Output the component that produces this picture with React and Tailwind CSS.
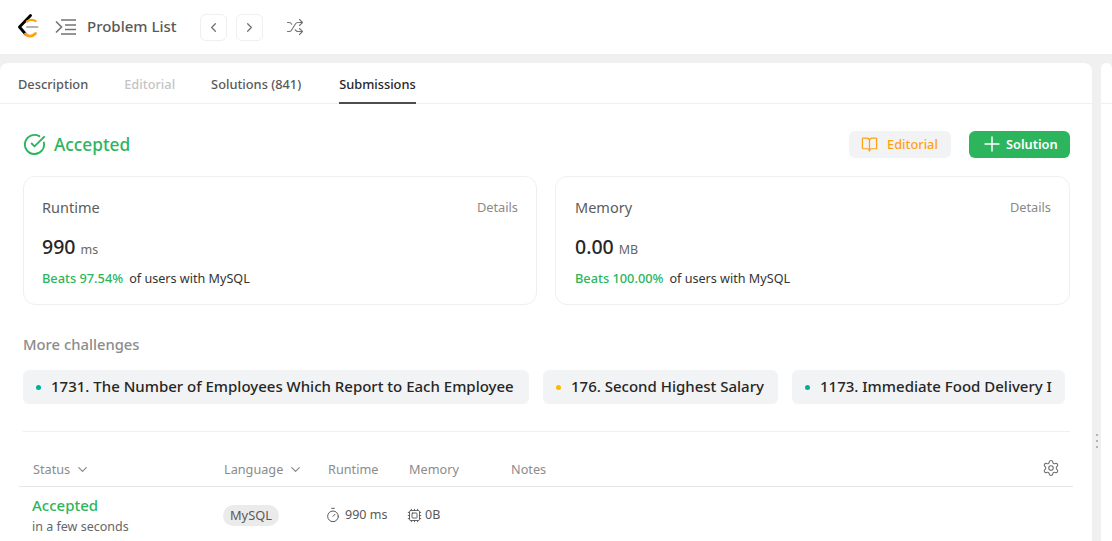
import React from "react";
import { ChevronDown, ChevronLeft, ChevronRight, Shuffle, BookOpen, Plus, Settings, Timer, Cpu, CircleCheckBig } from "lucide-react";

const font = "font-['Noto_Sans','Open_Sans',sans-serif]";

const Logo = () => (
  <svg width="22" height="26" viewBox="0 0 22 26" fill="none" strokeLinecap="round" strokeLinejoin="round">
    <path d="M12.5 1.5 L1.5 13 L7.5 20" stroke="#000" strokeWidth="2.8" />
    <path d="M7.5 20 C10.5 23.5 14.5 22.5 17.5 19.5" stroke="#ffa116" strokeWidth="2.8" />
    <path d="M9 7.5 C11.5 5.5 14.5 5.5 17.5 7" stroke="#ffa116" strokeWidth="2.4" />
    <path d="M9 13 H19.5" stroke="#b3b3b3" strokeWidth="2" />
  </svg>
);

const ListIcon = () => (
  <svg width="22" height="18" viewBox="0 0 22 18" fill="none" stroke="#737373" strokeWidth="1.6">
    <path d="M1 3.5 L6.5 9 L1 14.5" />
    <path d="M6 2 H21 M10 7 H21 M10 11.5 H21 M6 16 H21" />
  </svg>
);

const StatCard = ({ title, value, unit, beats, box }) => (
  <div className={`${box} h-[129px] rounded-xl border border-[#efefef] pr-[18px] pt-[20px]`}>
    <div className="flex items-center justify-between h-[22px]">
      <span className="text-[14.5px] text-[#5c5c5c]">{title}</span>
      <span className="text-[12.8px] text-[#8a8a8a]">Details</span>
    </div>
    <div className="flex items-baseline mt-[13px] h-[26px]">
      <span className="text-[19.5px] font-medium text-[#262626]">{value}</span>
      <span className="ml-[5px] text-[12.5px] text-[#666]">{unit}</span>
    </div>
    <div className="flex mt-[11px] h-[20px] items-center">
      <span className="text-[12.8px] font-medium text-[#2cb55d]">{beats}</span>
      <span className="ml-[6px] text-[12.6px] text-[#333]">of users with MySQL</span>
    </div>
  </div>
);

const Challenge = ({ dot, label, width }) => (
  <div className={`flex items-center h-[34px] rounded-md bg-[#f2f3f4] pl-[13px] ${width}`}>
    <span className={`w-[5px] h-[5px] rounded-full ${dot}`}></span>
    <span className="ml-[10px] pb-[2px] text-[15px] font-medium text-[#262626] whitespace-nowrap">{label}</span>
  </div>
);

const App = () => {
  return (
    <div className={`w-[1112px] h-[541px] overflow-hidden bg-[#f0f0f0] ${font}`}>
      {/* top bar */}
      <div className="h-[54px] bg-white flex items-center pl-[18px]">
        <Logo />
        <div className="ml-[15px]"><ListIcon /></div>
        <span className="ml-[10px] pb-[2px] text-[15px] font-medium text-[#595959]">Problem List</span>
        <div className="ml-[23px] w-[27px] h-[27px] rounded-md border border-[#efefef] flex items-center justify-center">
          <ChevronLeft size={15} color="#737373" />
        </div>
        <div className="ml-[9px] w-[27px] h-[27px] rounded-md border border-[#efefef] flex items-center justify-center">
          <ChevronRight size={15} color="#737373" />
        </div>
        <div className="ml-[23px]"><Shuffle size={18} color="#737373" strokeWidth={1.5} /></div>
      </div>

      <div className="flex mt-[9px]">
        {/* main panel */}
        <div className="w-[1092px] h-[478px] bg-white rounded-t-lg overflow-hidden">
          <div className="flex h-[41px] border-b border-[#f0f0f0] pl-[18px] text-[12.8px] font-medium">
            <div className="flex items-center pt-[3px] text-[#595959]">Description</div>
            <div className="flex items-center pt-[3px] ml-[36px] text-[#c4c4c4]">Editorial</div>
            <div className="flex items-center pt-[3px] ml-[36px] text-[#595959]">Solutions (841)</div>
            <div className="flex items-center pt-[4px] ml-[38px] text-[#262626] border-b-2 border-[#4d4d4d] h-[41px]">Submissions</div>
          </div>

          <div className="pl-[23px] pr-[22px]">
            <div className="flex items-center justify-between mt-[26px] h-[28px]">
              <div className="flex items-center">
                <CircleCheckBig size={23} color="#2cb55d" strokeWidth={2} />
                <span className="ml-[8px] pt-[2px] text-[17.3px] font-medium text-[#2cb55d]">Accepted</span>
              </div>
              <div className="flex items-center">
                <div className="flex items-center h-[27px] w-[102px] rounded-md bg-[#f2f3f4] pl-[12px]">
                  <BookOpen size={17} color="#ffa116" strokeWidth={1.75} />
                  <span className="ml-[9px] pt-[2px] text-[12.8px] font-medium text-[#ffa116]">Editorial</span>
                </div>
                <div className="flex items-center h-[27px] w-[101px] ml-[18px] rounded-md bg-[#2cb55d] pl-[11px]">
                  <Plus size={24} color="white" strokeWidth={1.5} />
                  <span className="ml-[2px] pt-[2px] text-[12.8px] font-semibold text-white">Solution</span>
                </div>
              </div>
            </div>

            <div className="flex gap-[18px] mt-[18px]">
              <StatCard title="Runtime" value="990" unit="ms" beats="Beats 97.54%" box="w-[514px] pl-[18px]" />
              <StatCard title="Memory" value="0.00" unit="MB" beats="Beats 100.00%" box="w-[515px] pl-[19px]" />
            </div>

            <div className="mt-[28px] h-[22px] text-[14.8px] font-medium text-[#8c8c8c]">More challenges</div>
            <div className="flex gap-[14px] mt-[15px]">
              <Challenge dot="bg-[#00af9b]" label="1731. The Number of Employees Which Report to Each Employee" width="w-[506px]" />
              <Challenge dot="bg-[#ffb800]" label="176. Second Highest Salary" width="w-[235px]" />
              <Challenge dot="bg-[#00af9b]" label="1173. Immediate Food Delivery I" width="w-[273px]" />
            </div>

            <div className="mt-[27px] border-t border-[#f0f0f0]"></div>
          </div>

          {/* submissions table */}
          <div className="ml-[19px] w-[1054px]">
            <div className="flex items-center h-[55px] border-b border-[#e6e6e6] pt-[21px] text-[12.7px] text-[#8c8c8c]">
              <div className="w-[191px] pl-[14px] flex items-center">
                Status <ChevronDown size={15} className="ml-[5px]" />
              </div>
              <div className="w-[118px] pl-[14px] flex items-center">
                Language <ChevronDown size={15} className="ml-[5px]" />
              </div>
              <div className="w-[81px]">Runtime</div>
              <div className="w-[102px]">Memory</div>
              <div className="flex-1">Notes</div>
              <Settings size={18} color="#737373" strokeWidth={1.5} className="mr-[13px] -mt-[3px]" />
            </div>
            <div className="flex items-center h-[54px] pt-[2px]">
              <div className="w-[204px] pl-[13px] pt-[2px]">
                <div className="text-[15px] leading-[20px] font-medium text-[#2cb55d]">Accepted</div>
                <div className="text-[12.5px] leading-[23px] text-[#666]">in a few seconds</div>
              </div>
              <div className="w-[102px] -mt-[2px]">
                <span className="inline-block h-[21px] leading-[21px] px-[7px] rounded-full bg-[#ebebeb] text-[12.8px] text-[#595959]">MySQL</span>
              </div>
              <div className="w-[82px] flex items-center text-[12.5px] text-[#595959]">
                <Timer size={16} strokeWidth={1.5} />
                <span className="ml-[4px]">990 ms</span>
              </div>
              <div className="flex items-center text-[12.5px] text-[#595959]">
                <Cpu size={15} strokeWidth={1.5} />
                <span className="ml-[3px]">0B</span>
              </div>
            </div>
          </div>
        </div>

        {/* drag handle */}
        <div className="w-[9px] h-[478px] flex flex-col items-center justify-center gap-[4px] pt-[278px]">
          <span className="w-[2px] h-[2px] bg-[#b3b3b3]"></span>
          <span className="w-[2px] h-[2px] bg-[#b3b3b3]"></span>
          <span className="w-[2px] h-[2px] bg-[#b3b3b3]"></span>
        </div>

        {/* right panel */}
        <div className="flex-1 h-[478px] bg-white rounded-t-lg">
          <div className="h-[41px] border-b border-[#f0f0f0]"></div>
        </div>
      </div>
    </div>
  );
};

export default App;
